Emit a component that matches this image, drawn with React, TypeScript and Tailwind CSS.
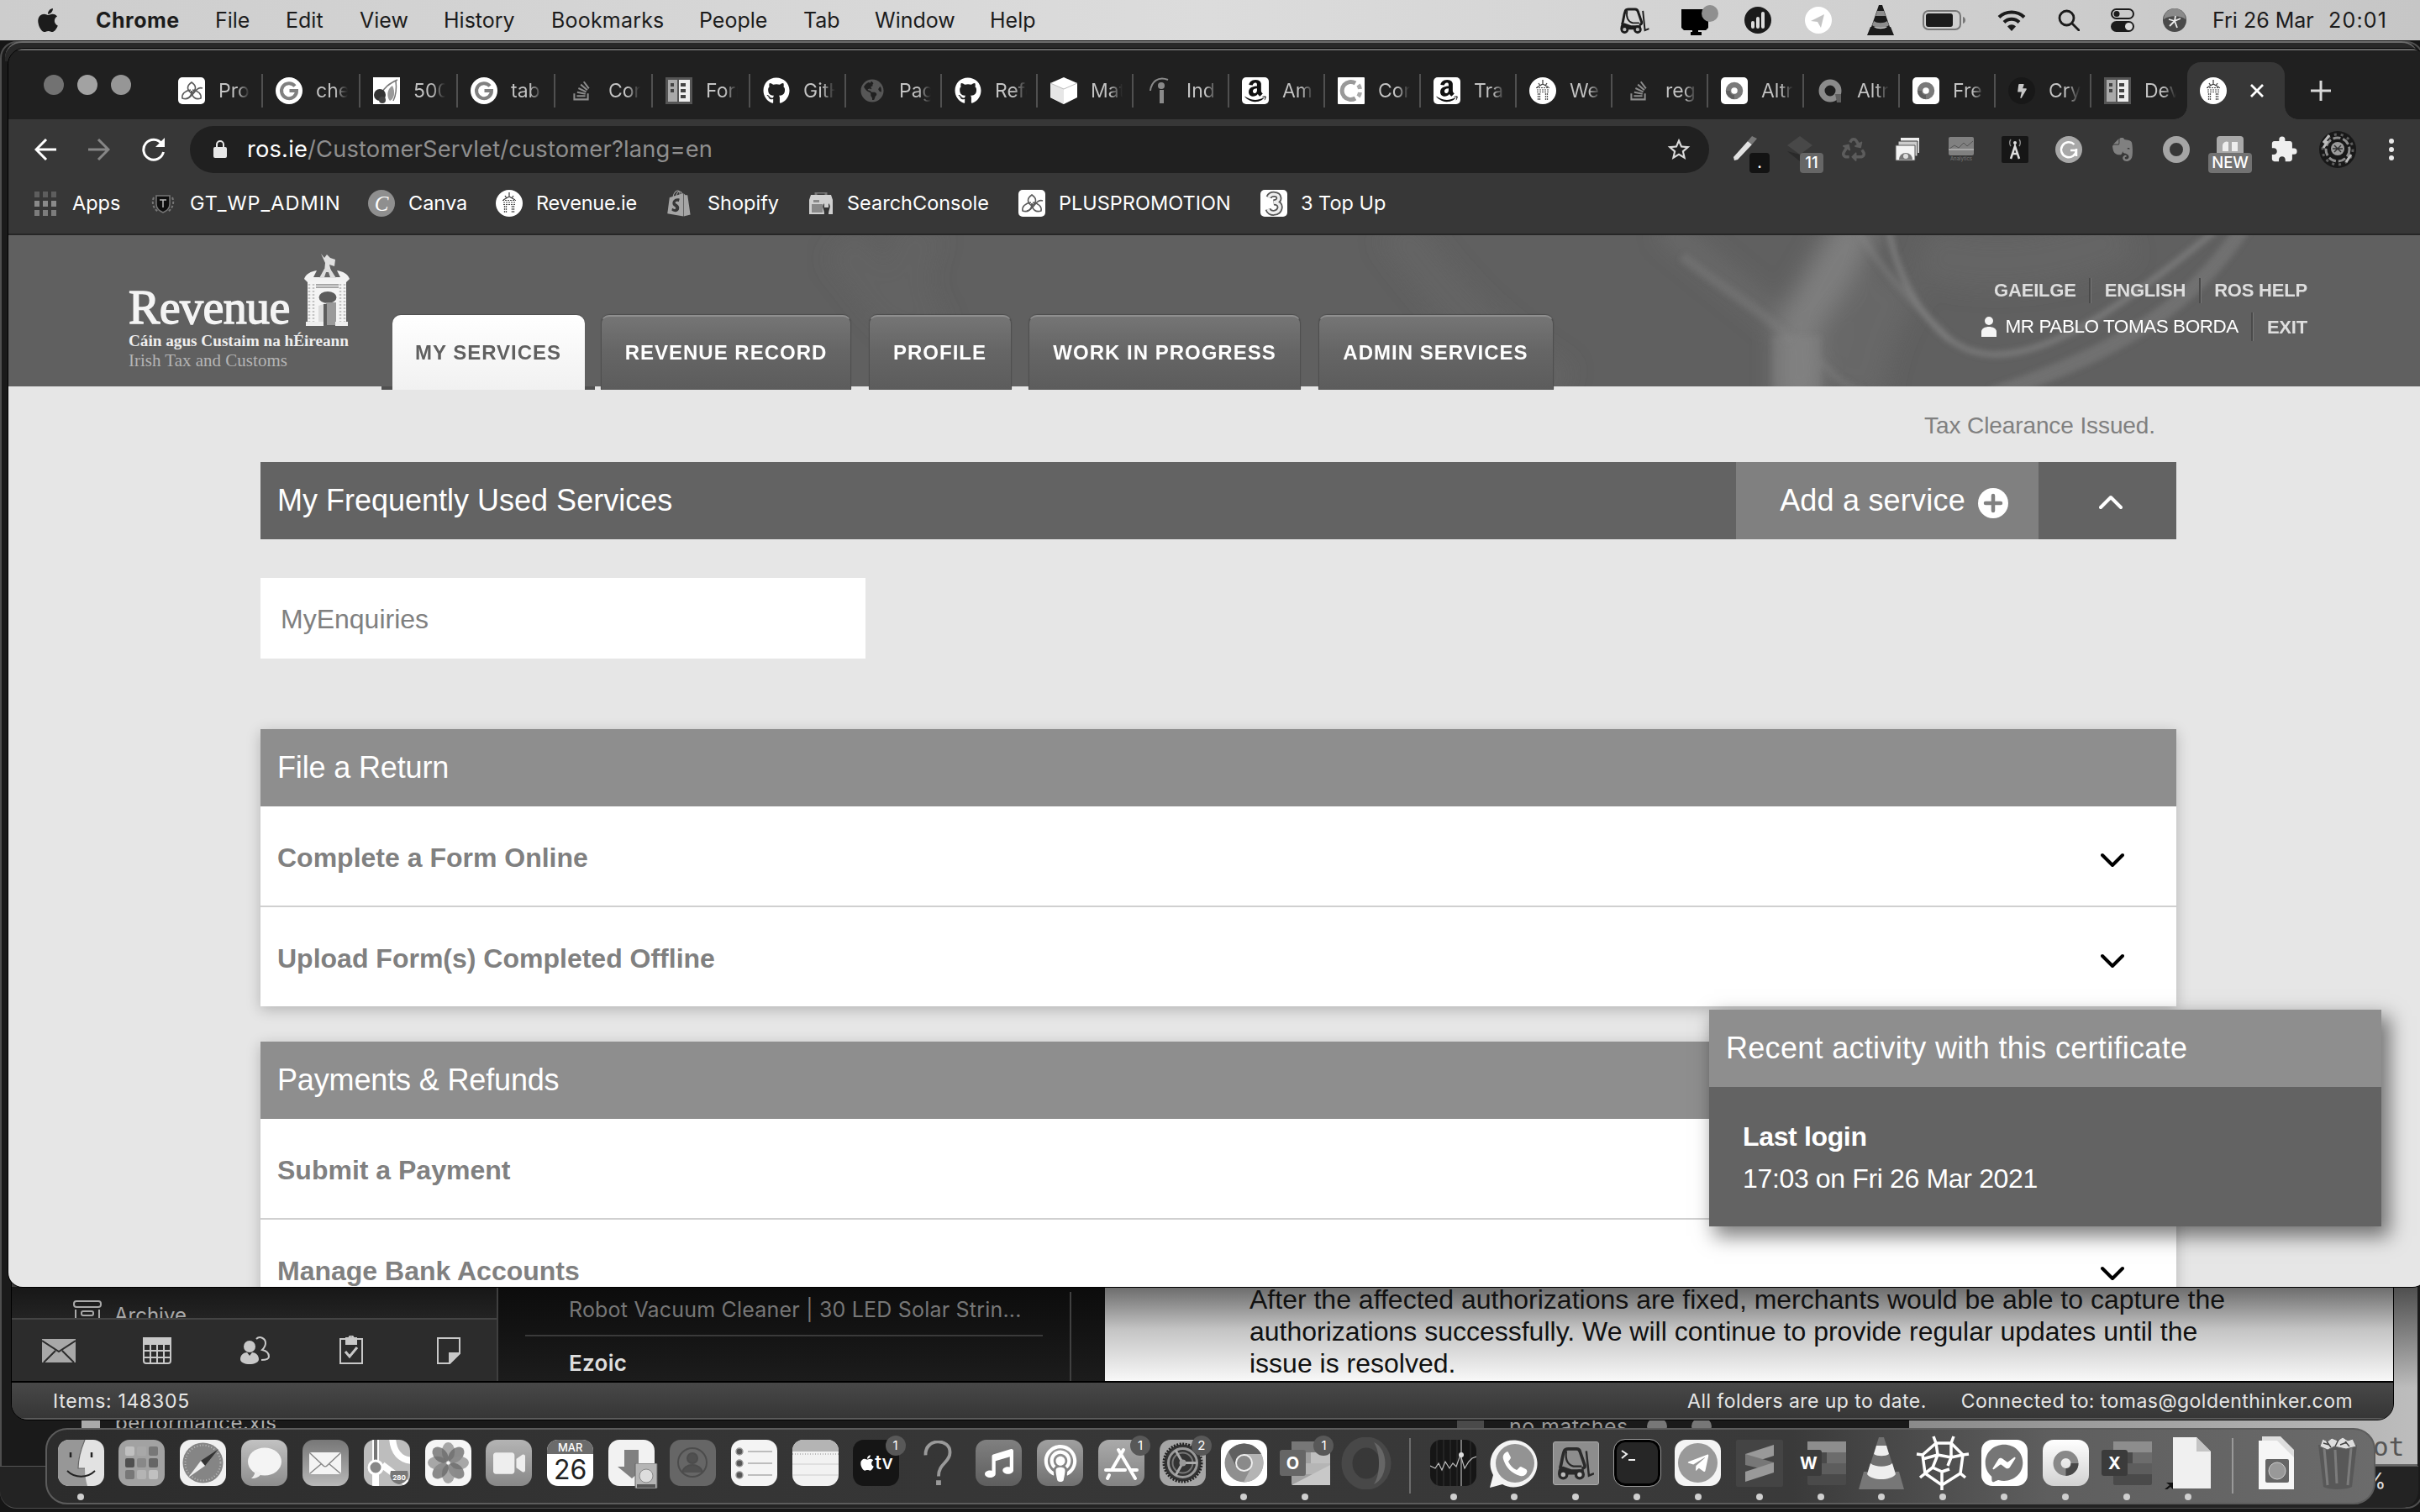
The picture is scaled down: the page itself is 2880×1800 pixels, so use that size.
import type { ReactNode } from "react";
import {
  FaAmazon,
  FaApple,
  FaBolt,
  FaEvernote,
  FaFacebookMessenger,
  FaGithub,
  FaGlobeAmericas,
  FaMusic,
  FaPodcast,
  FaRecycle,
  FaShopify,
  FaStackOverflow,
  FaTelegramPlane,
  FaVideo,
} from "react-icons/fa";
import { MdExtension, MdStarBorder } from "react-icons/md";

const sans = "font-['Liberation_Sans',Arial,sans-serif]";
const ui = "font-['Inter',sans-serif]";

/* ---------- small shared glyphs ---------- */

function Tower({ className = "" }: { className?: string }) {
  return (
    <svg viewBox="0 0 32 32" className={className}>
      <circle cx="16" cy="16" r="16" fill="#fff" />
      <path d="M16 3v6M9 12l7-4 7 4M11 7l2 3M21 7l-2 3" stroke="#444" strokeWidth="1.3" fill="none" />
      <path d="M8 12.500h16M9 15h14M9 17.500h14" stroke="#444" strokeWidth="1.200" strokeDasharray="2 1" />
      <path d="M10.500 19v9M12.500 19v9M19.500 19v9M21.500 19v9" stroke="#555" strokeWidth="1.300" strokeDasharray="2 1" />
    </svg>
  );
}

function Knot({ className = "" }: { className?: string }) {
  return (
    <svg viewBox="0 0 32 32" className={className}>
      <rect width="32" height="32" rx="5" fill="#fff" />
      <g fill="none" stroke="#5a5a5a" strokeWidth="1.600">
        <path d="M16 6c6 4 6 9 0 13-6-4-6-9 0-13z" />
        <path d="M15 15C8 16 4 20 5 25c6 2 11-1 11-9" />
        <path d="M17 15c7 1 11 5 10 10-6 2-11-1-11-9" />
        <path d="M10 25c4 0 7-4 10-8 3-4 6-5 9-4" />
      </g>
    </svg>
  );
}

function GoogleG({ className = "" }: { className?: string }) {
  return (
    <svg viewBox="0 0 32 32" className={className}>
      <circle cx="16" cy="16" r="16" fill="#fff" />
      <path d="M23 10.500A9 9 0 1 0 25 16h-8.500" fill="none" stroke="#808080" strokeWidth="4" />
    </svg>
  );
}

function Cherry({ className = "" }: { className?: string }) {
  return (
    <svg viewBox="0 0 32 32" className={className}>
      <rect width="32" height="32" fill="#fff" />
      <path d="M9 20C14 12 18 8 29 3M27 4c1 8 1 16-3 24" fill="none" stroke="#777" strokeWidth="1.500" />
      <path d="M23 10c-7 4-7 14-3 18 5-2 7-10 3-18z" fill="#999" />
      <circle cx="8" cy="21" r="7" fill="#333" />
      <circle cx="11" cy="27" r="4" fill="#444" />
    </svg>
  );
}

function Forms({ className = "" }: { className?: string }) {
  return (
    <svg viewBox="0 0 32 32" className={className}>
      <rect width="32" height="32" fill="#555" />
      <rect x="3" y="3" width="11" height="26" fill="#aaa" />
      <rect x="16" y="3" width="13" height="26" fill="#eee" />
      <path d="M6 7h4v4H6zM6 14h4v4H6zM18 7h6v4h-6zM18 14h6v4h-6zM18 21h6v4h-6z" fill="#444" />
    </svg>
  );
}

function Cube({ className = "" }: { className?: string }) {
  return (
    <svg viewBox="0 0 32 32" className={className}>
      <path d="M16 0l16 7v17l-16 8-16-8V7z" fill="#fff" />
      <path d="M0 7l16 7v18L0 24z" fill="#e6e6e6" />
      <path d="M0 7l16 7 16-7" fill="none" stroke="#bbb" />
    </svg>
  );
}

function Indeed({ className = "" }: { className?: string }) {
  return (
    <svg viewBox="0 0 32 32" className={className}>
      <circle cx="18" cy="10" r="4" fill="#8a8a8a" />
      <path d="M16 15h5v16h-5z" fill="#8a8a8a" />
      <path d="M5 16C6 6 14-2 26 3" fill="none" stroke="#8a8a8a" strokeWidth="2" />
    </svg>
  );
}

function AmazonTile({ className = "" }: { className?: string }) {
  return (
    <div className={`${className} flex items-center justify-center rounded-[5px] bg-white`}>
      <FaAmazon className="h-[30px] w-[30px] text-[#111]" />
    </div>
  );
}

function Ring({ className = "" }: { className?: string }) {
  return (
    <svg viewBox="0 0 32 32" className={className}>
      <rect width="32" height="32" rx="1" fill="#fff" />
      <path d="M21 7a10.500 10.500 0 1 0 0 18" fill="none" stroke="#999" strokeWidth="5" />
      <path d="M24.500 9a11 11 0 0 1 2 5M26.500 18a11 11 0 0 1-2 5" fill="none" stroke="#aaa" strokeWidth="5" />
    </svg>
  );
}

function Donut({ className = "", tile = true }: { className?: string; tile?: boolean }) {
  return (
    <svg viewBox="0 0 32 32" className={className}>
      {tile && <rect width="32" height="32" rx="5" fill="#fff" />}
      <circle cx="16" cy="16" r={tile ? 7 : 10} fill="none" stroke={tile ? "#7a7a7a" : "#8b8b8b"} strokeWidth={tile ? 6.5 : 7} />
      <path d={tile ? "M16 26a10 10 0 0 1-10-10h5c0 4 2 5 5 5z" : "M22 20h7v10h-5z"} fill="#5f5f5f" />
    </svg>
  );
}

function Bolt({ className = "" }: { className?: string }) {
  return (
    <div className={`${className} flex items-center justify-center rounded-full bg-[#181818]`}>
      <FaBolt className="h-[17px] w-[17px] text-[#c8c8c8]" />
    </div>
  );
}

function Forklift({ className = "" }: { className?: string }) {
  return (
    <svg viewBox="0 0 36 32" className={className} fill="none" stroke="currentColor" strokeWidth="2.500">
      <path d="M3 21C5 14 5 9 7 4c.6-1.500 2-2 4-2h8c2 0 3 1 3.500 3L27 18c.5 2-1 3-3 3" strokeWidth="3" />
      <path d="M9 4c-1 7 0 13 7 15h8" strokeWidth="1.800" />
      <path d="M1 26c0-4 1-7 5-7l8 3h12v5H1z" fill="currentColor" stroke="none" />
      <circle cx="6" cy="27" r="3.600" fill="#bbb" strokeWidth="2.800" />
      <circle cx="22" cy="27" r="3.600" fill="#bbb" strokeWidth="2.800" />
      <path d="M28.500 4l2.500 24 5-2" strokeWidth="2" />
    </svg>
  );
}

function Chevron({ up = false, className = "" }: { up?: boolean; className?: string }) {
  return (
    <svg viewBox="0 0 28 18" className={className} fill="none" stroke="currentColor" strokeWidth="4" strokeLinecap="round" strokeLinejoin="round">
      <path d={up ? "M2 15L14 3l12 12" : "M2 3l12 12L26 3"} />
    </svg>
  );
}

/* ---------- macOS menu bar ---------- */

const menus = [
  ["Chrome", "w-[142px] font-bold tracking-[0.500px]"],
  ["File", "w-[84px]"],
  ["Edit", "w-[88px]"],
  ["View", "w-[100px]"],
  ["History", "w-[128px]"],
  ["Bookmarks", "w-[176px] tracking-[0.200px]"],
  ["People", "w-[124px]"],
  ["Tab", "w-[85px]"],
  ["Window", "w-[137px]"],
  ["Help", "w-[100px]"],
];

function MenuBar() {
  return (
    <header className={`${ui} flex h-12 items-center bg-gradient-to-r from-[#cdcdcd] via-[#dcdcdc] to-[#c6c6c6] text-[25px] text-[#1c1c1c]`}>
      <FaApple className="ml-[42px] h-[32px] w-[30px]" />
      <nav className="ml-[42px] flex pt-px">
        {menus.map(([label, cls]) => (
          <span key={label} className={`shrink-0 whitespace-nowrap ${cls}`}>
            {label}
          </span>
        ))}
      </nav>
      <div className="ml-auto flex items-center">
        <Forklift className="mr-[37px] h-[31px] w-[36px]" />
        <svg viewBox="0 0 46 36" className="mr-[30px] h-[36px] w-[46px]">
          <path d="M1 5h32v22l-3 3H4l-3-3zM14 29h7v3h4v4H12v-4h2z" fill="#000" />
          <circle cx="35" cy="10" r="10" fill="#8f8f8f" />
        </svg>
        <svg viewBox="0 0 32 32" className="mr-[40px] h-8 w-8">
          <circle cx="16" cy="16" r="16" fill="#1b1b1b" />
          <path d="M10 19v5M16 14v10M22 8v16" stroke="#ddd" strokeWidth="4" strokeLinecap="round" />
        </svg>
        <svg viewBox="0 0 32 32" className="mr-[41px] h-8 w-8">
          <circle cx="16" cy="16" r="16" fill="#fff" />
          <path d="M7 17L23 9l-4 16-4-7z" fill="#c4c4c4" />
        </svg>
        <svg viewBox="0 0 34 36" className="mr-[33px] h-[36px] w-[34px]">
          <path d="M15 0h4l9 26H6z" fill="#1b1b1b" />
          <path d="M13 7l-2 6h12l-2-6zM9 19l-2 5c4 4 16 4 20 0l-2-5c-4 3-12 3-16 0z" fill="#8d8d8d" />
          <path d="M5 26h4c4 3 12 3 16 0h4l4 10H1z" fill="#1b1b1b" />
        </svg>
        <svg viewBox="0 0 52 24" className="mr-[37px] h-[24px] w-[52px]">
          <rect x="1" y="1" width="44" height="22" rx="6" fill="none" stroke="#777" strokeWidth="2" />
          <rect x="4" y="4" width="32" height="16" rx="3" fill="#1b1b1b" />
          <path d="M48 8c4 1 4 7 0 8z" fill="#777" />
        </svg>
        <svg viewBox="0 0 34 25" className="mr-[38px] h-[25px] w-[34px]" fill="none" stroke="#1b1b1b" strokeWidth="4">
          <path d="M2 8.500c8-8 22-8 30 0M8 14.500c5-5 13-5 18 0" />
          <path d="M17 25l-5-5.500c3-3 7-3 10 0z" fill="#1b1b1b" stroke="none" />
        </svg>
        <svg viewBox="0 0 26 26" className="mr-[37px] h-[26px] w-[26px]" fill="none" stroke="#1b1b1b" strokeWidth="2.800">
          <circle cx="10.500" cy="10.500" r="8.500" />
          <path d="M17 17l8 8" strokeLinecap="round" />
        </svg>
        <svg viewBox="0 0 28 28" className="mr-[34px] h-[28px] w-[28px]">
          <rect x="1" y="1" width="26" height="11" rx="5.500" fill="none" stroke="#1b1b1b" strokeWidth="2" />
          <circle cx="7" cy="6.500" r="3.500" fill="#1b1b1b" />
          <rect y="15" width="28" height="13" rx="6.500" fill="#1b1b1b" />
          <circle cx="21.500" cy="21.500" r="4.500" fill="#ddd" />
        </svg>
        <svg viewBox="0 0 28 28" className="mr-[31px] h-[28px] w-[28px]">
          <circle cx="14" cy="14" r="14" fill="#4a4a4a" />
          <path d="M1 13a13 13 0 0 1 26 0c-6-5-20-5-26 0z" fill="#8a8a8a" />
          <path d="M14 15l-7-2M14 15l7-3M14 15l3 8M14 15l-6 6M14 15l1-6" stroke="#eee" strokeWidth="1.800" />
        </svg>
        <span className="w-[138px] pt-px whitespace-nowrap">Fri 26 Mar</span>
        <span className="w-[109px] pt-px tracking-[1.200px] whitespace-nowrap">20:01</span>
      </div>
    </header>
  );
}

/* ---------- browser chrome ---------- */

const fav = "h-8 w-8 shrink-0";
const so = <FaStackOverflow className="h-[26px] w-8 shrink-0 text-[#8c8c8c]" />;
const gh = <FaGithub className="h-8 w-8 shrink-0 text-white" />;

const tabs: { icon: ReactNode; label: string }[] = [
  { icon: <Knot className={fav} />, label: "Pro" },
  { icon: <GoogleG className={fav} />, label: "che" },
  { icon: <Cherry className={fav} />, label: "500" },
  { icon: <GoogleG className={fav} />, label: "tab" },
  { icon: so, label: "Con" },
  { icon: <Forms className={fav} />, label: "Form" },
  { icon: gh, label: "GitH" },
  { icon: <FaGlobeAmericas className="h-7 w-8 shrink-0 text-[#565656]" />, label: "Pag" },
  { icon: gh, label: "Refe" },
  { icon: <Cube className={fav} />, label: "Mat" },
  { icon: <Indeed className={fav} />, label: "Ind" },
  { icon: <AmazonTile className={fav} />, label: "Am" },
  { icon: <Ring className={fav} />, label: "Con" },
  { icon: <AmazonTile className={fav} />, label: "Tra" },
  { icon: <Tower className={fav} />, label: "We" },
  { icon: so, label: "reg" },
  { icon: <Donut className={fav} />, label: "Altr" },
  { icon: <Donut tile={false} className={fav} />, label: "Altr" },
  { icon: <Donut className={fav} />, label: "Fre" },
  { icon: <Bolt className={fav} />, label: "Cry" },
  { icon: <Forms className={fav} />, label: "Dev" },
];

function TabStrip() {
  return (
    <div className="flex h-[82px] items-end bg-[#202020]">
      <div className="ml-[42px] flex gap-4 pb-[29px]">
        <i className="h-6 w-6 rounded-full bg-[#727272]" />
        <i className="h-6 w-6 rounded-full bg-[#a2a2a2]" />
        <i className="h-6 w-6 rounded-full bg-[#969696]" />
      </div>
      <div className="ml-[41px] flex h-[68px] items-center">
        {tabs.map((t, i) => (
          <div
            key={i}
            className={`flex h-10 items-center pl-[15px] ${i < 6 ? "w-[116px]" : "w-[114px]"} ${i < 20 ? "border-r-2 border-[#505050]" : ""}`}
          >
            {t.icon}
            <span className="ml-4 w-[38px] overflow-hidden bg-gradient-to-r from-[#c4c4c4] from-60% to-[#202020] bg-clip-text text-[23px] whitespace-nowrap text-transparent">
              {t.label}
            </span>
          </div>
        ))}
        <div className="relative flex h-[68px] w-[116px] items-center rounded-t-2xl bg-[#373737] pl-[15px]">
          <i className="absolute bottom-0 -left-4 h-4 w-4 bg-[radial-gradient(circle_at_0_0,transparent_15.500px,#373737_16px)]" />
          <i className="absolute -right-4 bottom-0 h-4 w-4 bg-[radial-gradient(circle_at_100%_0,transparent_15.500px,#373737_16px)]" />
          <Tower className={fav} />
          <svg viewBox="0 0 16 16" className="ml-[28px] h-4 w-4" stroke="#fff" strokeWidth="2.800">
            <path d="M1 1l14 14M15 1L1 15" />
          </svg>
        </div>
        <svg viewBox="0 0 24 24" className="ml-[31px] h-6 w-6" stroke="#d8d8d8" strokeWidth="3">
          <path d="M12 0v24M0 12h24" />
        </svg>
      </div>
    </div>
  );
}

function Badge({ children, className }: { children: ReactNode; className: string }) {
  return (
    <b className={`absolute top-[36px] flex h-6 items-center justify-center rounded-[4px] text-[18.500px] font-medium text-white ${className}`}>
      {children}
    </b>
  );
}

const ext = "relative flex h-16 w-16 shrink-0 items-center justify-center";

function Toolbar() {
  return (
    <div className="flex h-[72px] items-center bg-[#373737] text-[27.300px]">
      <svg viewBox="0 0 26 26" className="ml-[31px] h-[26px] w-[26px]" fill="none" stroke="#fff" strokeWidth="3">
        <path d="M26 13H3M14 1L2 13l12 12" />
      </svg>
      <svg viewBox="0 0 26 26" className="ml-[38px] h-[26px] w-[26px]" fill="none" stroke="#868686" strokeWidth="3">
        <path d="M0 13h23M12 1l12 12-12 12" />
      </svg>
      <svg viewBox="0 0 28 28" className="ml-[38px] h-[28px] w-[28px]" fill="none" stroke="#fff" strokeWidth="3">
        <path d="M23.500 7A12 12 0 1 0 25.500 17" />
        <path d="M27 0v11H16z" fill="#fff" stroke="none" />
      </svg>
      <div className="ml-[29px] flex h-14 w-[1808px] shrink-0 items-center rounded-full bg-[#202020] pr-[20px] pl-[28px]">
        <svg viewBox="0 0 16 22" className="h-[22px] w-4">
          <rect y="8" width="16" height="13" rx="2" fill="#e8e8e8" />
          <path d="M4 9V5a4 4 0 0 1 8 0v4" fill="none" stroke="#e8e8e8" strokeWidth="2" />
        </svg>
        <span className="ml-[24px] pt-px tracking-[0.170px] whitespace-nowrap text-[#8f8f8f]">
          <span className="text-white">ros.ie</span>/CustomerServlet/customer?lang=en
        </span>
        <MdStarBorder className="ml-auto h-[32px] w-[32px] text-[#dadada]" />
      </div>
      <div className="ml-[12px] flex">
        <div className={ext}>
          <svg viewBox="0 0 32 32" className="h-8 w-8">
            <path d="M1 25L18 6l5 4L6 28l-4 1z" fill="#e2e2e2" />
            <path d="M18 6l5-6 6 3-6 7z" fill="#777" />
          </svg>
          <Badge className="left-[36px] w-6 bg-[#131313]">.</Badge>
        </div>
        <div className={ext}>
          <svg viewBox="0 0 32 32" className="h-8 w-8">
            <path d="M16 0l15 11-15 11L1 11z" fill="#484848" />
            <path d="M1 18l15 4v8z" fill="#2a2a2a" />
          </svg>
          <Badge className="left-[32px] w-7 bg-[#666]">11</Badge>
        </div>
        <div className={ext}>
          <FaRecycle className="h-[28px] w-[28px] text-[#5c5c5c]" />
        </div>
        <div className={ext}>
          <svg viewBox="0 0 32 28" className="h-7 w-8">
            <path d="M8 0h22v18H8z" fill="#eee" />
            <path d="M5 4h23v18H5z" fill="#ccc" stroke="#373737" />
            <path d="M2 9h23v18H2z" fill="#f4f4f4" stroke="#555" />
            <path d="M6 26a8 8 0 0 1 16 0" fill="#777" />
            <circle cx="14" cy="22" r="3" fill="#ddd" />
          </svg>
        </div>
        <div className={ext}>
          <div className="flex h-[30px] flex-col items-center">
            <svg viewBox="0 0 30 22" className="h-[22px] w-[30px]">
              <rect width="30" height="22" rx="2" fill="#808080" />
              <path d="M1 14l6-4 5 3 6-6 4 4 7-6" fill="none" stroke="#555" />
              <path d="M0 15h30" stroke="#ccc" />
            </svg>
            <span className="text-[6px] leading-[8px] text-[#777]">Analytics</span>
          </div>
        </div>
        <div className={ext}>
          <svg viewBox="0 0 32 32" className="h-8 w-8">
            <rect width="32" height="32" rx="2" fill="#161616" />
            <path d="M11 27l5-15 5 15M13 21h6" fill="none" stroke="#ddd" strokeWidth="2.500" />
            <circle cx="16" cy="8" r="2" fill="#ddd" />
            <path d="M11 4c-2 3-2 5 0 8M21 4c2 3 2 5 0 8" fill="none" stroke="#888" strokeWidth="1.500" />
          </svg>
        </div>
        <div className={ext}>
          <svg viewBox="0 0 32 32" className="h-8 w-8">
            <circle cx="16" cy="16" r="16" fill="#a8a8a8" />
            <path d="M22.500 10A9 9 0 1 0 25 17h-7M25 15v9" fill="none" stroke="#fff" strokeWidth="2.500" />
          </svg>
        </div>
        <div className={ext}>
          <FaEvernote className="h-[32px] w-[32px] text-[#808080]" />
        </div>
        <div className={ext}>
          <i className="h-8 w-8 rounded-full border-[8px] border-[#a5a5a5]" />
        </div>
        <div className={ext}>
          <svg viewBox="0 0 32 32" className="h-8 w-8">
            <rect width="32" height="32" rx="4" fill="#a9a9a9" />
            <path d="M7 18V11a5 5 0 0 1 7-4v11M18 7h7v11h-7z" fill="#eee" />
          </svg>
          <Badge className="left-[6px] w-[52px] bg-[#727272]">NEW</Badge>
        </div>
        <div className={ext}>
          <MdExtension className="h-[34px] w-[34px] text-[#efefef]" />
        </div>
        <div className={ext}>
          <svg viewBox="0 0 44 44" className="h-11 w-11">
            <circle cx="22" cy="22" r="22" fill="#181818" />
            <circle cx="22" cy="22" r="14" fill="none" stroke="#8c8c8c" strokeWidth="3" strokeDasharray="9 3" />
            <circle cx="22" cy="22" r="18" fill="none" stroke="#5d5d5d" strokeWidth="3" strokeDasharray="3 5" />
            <circle cx="22" cy="21" r="8" fill="#9b9b9b" />
            <path d="M16 21h12M18 17l8 8M26 17l-8 8" stroke="#333" strokeWidth="1.500" />
            <path d="M12 5l-7 9M10 12l-5 8M38 28l-6 9" stroke="#bbb" strokeWidth="3" />
          </svg>
        </div>
        <div className="flex h-16 w-16 flex-col items-center justify-center gap-1">
          <i className="h-1.5 w-1.5 rounded-full bg-[#e8e8e8]" />
          <i className="h-1.5 w-1.5 rounded-full bg-[#e8e8e8]" />
          <i className="h-1.5 w-1.5 rounded-full bg-[#e8e8e8]" />
        </div>
      </div>
    </div>
  );
}

const bookmarks: { icon: ReactNode; label: string; cls: string }[] = [
  {
    icon: (
      <div className="ml-[1px] grid w-[26px] grid-cols-3 gap-1">
        {["bg-[#5e5e5e]", "bg-[#8a8a8a]", "bg-[#7c7c7c]"].flatMap((c, r) =>
          [0, 1, 2].map((k) => <i key={`${r}${k}`} className={`h-[7px] w-[6px] ${c}`} />),
        )}
      </div>
    ),
    label: "Apps",
    cls: "w-[138px] gap-[19px]",
  },
  {
    icon: (
      <svg viewBox="0 0 32 32" className="h-8 w-8">
        <path d="M8 7h16v10c0 6-4 8-8 10-4-2-8-4-8-10z" fill="#0e0e0e" stroke="#777" strokeWidth="1.500" />
        <path d="M12 12h8M16 12v9" stroke="#bbb" strokeWidth="1.500" />
        <path d="M5 9c-3 7 0 13 5 17M27 9c3 7 0 13-5 17" stroke="#777" strokeWidth="2" strokeDasharray="3 2" fill="none" />
      </svg>
    ),
    label: "GT_WP_ADMIN",
    cls: "w-[260px] gap-4 tracking-[1px]",
  },
  {
    icon: (
      <div className="flex h-8 w-8 items-center justify-center rounded-full bg-[#8f8f8f] font-['Liberation_Serif',serif] text-[25px] leading-none text-white italic">
        C
      </div>
    ),
    label: "Canva",
    cls: "w-[152px] gap-4",
  },
  { icon: <Tower className="h-8 w-8" />, label: "Revenue.ie", cls: "w-[202px] gap-4 tracking-[-0.200px]" },
  { icon: <FaShopify className="h-8 w-8 text-[#a5a5a5]" />, label: "Shopify", cls: "w-[171px] gap-[18px]" },
  {
    icon: (
      <svg viewBox="0 0 28 26" className="h-[26px] w-[28px]">
        <path d="M8 4V0h12v4" fill="none" stroke="#777" strokeWidth="3" />
        <path d="M2 3h24l2 6v17H0V9z" fill="#cfcfcf" />
        <path d="M5 9h7v3H5zM3 14h13v10H3z" fill="#888" />
        <path d="M18 13c-4 4 0 7 0 13h5c0-6 4-9 0-13v5h-5z" fill="#333" />
      </svg>
    ),
    label: "SearchConsole",
    cls: "w-[249px] gap-[17px]",
  },
  { icon: <Knot className="h-8 w-8" />, label: "PLUSPROMOTION", cls: "w-[288px] gap-4" },
  {
    icon: (
      <svg viewBox="0 0 32 32" className="h-8 w-8">
        <rect width="32" height="32" rx="5" fill="#fff" />
        <path d="M10 9c2-5 12-5 12 1 0 3-2 4-6 5 5 0 8 3 7 7-2 7-12 7-14 1" fill="none" stroke="#555" strokeWidth="7" />
        <path d="M10 9c2-5 12-5 12 1 0 3-2 4-6 5 5 0 8 3 7 7-2 7-12 7-14 1" fill="none" stroke="#eee" strokeWidth="3.500" />
      </svg>
    ),
    label: "3 Top Up",
    cls: "w-[200px] gap-4",
  },
];

function Bookmarks() {
  return (
    <div className="flex h-[66px] items-center border-b-2 border-[#262626] bg-[#373737] pb-2 pl-[30px] text-[23.500px] text-white">
      {bookmarks.map((b) => (
        <div key={b.label} className={`flex shrink-0 items-center whitespace-nowrap ${b.cls}`}>
          {b.icon}
          {b.label}
        </div>
      ))}
    </div>
  );
}

/* ---------- revenue page ---------- */

function Smoke() {
  return (
    <svg viewBox="0 0 1920 180" className="absolute top-0 right-0 h-[180px] w-[1920px]" preserveAspectRatio="none">
      <defs>
        <filter id="soft" x="-50%" y="-50%" width="200%" height="200%">
          <feGaussianBlur stdDeviation="14" />
        </filter>
        <filter id="fine" x="-50%" y="-50%" width="200%" height="200%">
          <feGaussianBlur stdDeviation="3" />
        </filter>
      </defs>
      <g fill="none" filter="url(#soft)">
        <path d="M40 10c30 30 40 60 80 90M140-10c-30 60-20 90 10 130" stroke="#6a6a6a" strokeWidth="50" opacity=".3" />
        <path d="M700-10c60 80 100 130 200 190" stroke="#6d6d6d" strokeWidth="50" opacity=".3" />
        <path d="M1180 200V110L1256-20" stroke="#888" strokeWidth="52" opacity=".75" />
        <path d="M1020-10l160 130" stroke="#7a7a7a" strokeWidth="24" opacity=".4" />
        <path d="M1240 190c10-60 20-90 50-140" stroke="#727272" strokeWidth="80" opacity=".45" />
        <path d="M1330 20c60 20 140 20 240-20" stroke="#6e6e6e" strokeWidth="60" opacity=".35" />
      </g>
      <g fill="none" filter="url(#fine)">
        <path d="M1042 25c50 40 90 60 130 100" stroke="#808080" strokeWidth="12" opacity=".35" />
        <path d="M1178 190v-70" stroke="#8a8a8a" strokeWidth="58" opacity=".35" />
        <path d="M1288-5C1300 60 1345 141 1412 142S1560 90 1676-5" stroke="#8b8b8b" strokeWidth="7" opacity=".6" />
        <path d="M1252-5C1290 60 1330 90 1360 125" stroke="#858585" strokeWidth="8" opacity=".4" />
        <path d="M1410 190C1530 150 1640 100 1710-10" stroke="#858585" strokeWidth="18" opacity=".45" />
        <path d="M1206 150c20 20 30 30 50 35" stroke="#858585" strokeWidth="8" opacity=".35" />
      </g>
    </svg>
  );
}

function Logo() {
  return (
    <div className="relative ml-[143px] h-full w-[272px] font-['Liberation_Serif',serif]">
      <svg viewBox="0 0 54 86" className="absolute top-[22px] left-[209px] h-[86px] w-[54px]">
        <path d="M20 0l4 5 3-4 4 4 6 2-1 8-6-2 2 8h-8l1-10z" fill="#e0e0e0" />
        <path d="M0 30c2-6 8-9 15-10l-4 8h32l-4-8c7 1 13 4 15 10l-4 4H4z" fill="#f2f2f2" />
        <path d="M18 29l6-11h7l7 11z" fill="#ddd" />
        <path d="M24 28l2-6h3l2 6z" fill="#666" />
        <rect x="4" y="33" width="46" height="52" fill="#f4f4f4" />
        <path d="M14 37h27M14 40h27" stroke="#8d8d8d" strokeWidth="1.500" />
        <path d="M6 36v48M11 36v48M43 36v48M48 36v48" stroke="#c4c4c4" strokeWidth="2.500" strokeDasharray="2 2" />
        <ellipse cx="28" cy="52" rx="10.500" ry="7" fill="#5c5c5c" />
        <path d="M17 62l9-3v24l-9 2z" fill="#dcdcdc" />
        <path d="M26 58h12v27H26z" fill="#9a9a9a" />
        <path d="M23 60h4v25h-4z" fill="#5c5c5c" />
        <path d="M2 81h21v5H2zM37 81h15v5H37z" fill="#eee" />
      </svg>
      <div className="absolute top-[50px] left-0 text-[56px] leading-[72px] tracking-[-0.600px] text-[#f4f4f4] [-webkit-text-stroke:1.400px_#f4f4f4]">
        Revenue
      </div>
      <div className="absolute top-[114px] left-0 text-[19.200px] leading-[24px] font-bold whitespace-nowrap text-[#eee]">
        Cáin agus Custaim na hÉireann
      </div>
      <div className="absolute top-[137px] left-0 text-[21px] leading-[24px] whitespace-nowrap text-[#b4b4b4]">
        Irish Tax and Customs
      </div>
    </div>
  );
}

const navTabs = [
  ["REVENUE RECORD", "w-[298px]"],
  ["PROFILE", "w-[170px]"],
  ["WORK IN PROGRESS", "w-[324px]"],
  ["ADMIN SERVICES", "w-[280px]"],
];

function SiteHeader() {
  return (
    <div className={`${sans} relative z-10 flex h-[180px] bg-[#606060]`}>
      <Smoke />
      <Logo />
      <nav className="relative mt-[95px] ml-[29px] flex h-[89px] items-end text-[24px] font-bold tracking-[1px] text-white">
        <div className="flex h-[89px] w-[254px] justify-center bg-[linear-gradient(to_bottom,transparent_85px,#505050_85px)]">
          <div className="flex w-[229px] items-center justify-center rounded-t-[10px] bg-gradient-to-b from-white to-[#f1f1f1] pt-px text-[#606060] shadow-[0_-1px_1px_#505050]">
            MY SERVICES
          </div>
        </div>
        <div className="ml-[7px] flex gap-[20.500px]">
          {navTabs.map(([label, cls]) => (
            <div
              key={label}
              className={`flex h-[89px] items-center justify-center rounded-t-[10px] border-x border-t-2 border-x-[#4f4f4f] border-t-[#8f8f8f] bg-gradient-to-b from-[#757575] from-0% via-[#666] via-45% to-[#5c5c5c] pb-px whitespace-nowrap shadow-[0_-1px_1px_#4c4c4c] ${cls}`}
            >
              {label}
            </div>
          ))}
        </div>
      </nav>
      <div className="relative mt-[50px] ml-auto w-[560px] pr-[134px] text-[22px] font-bold tracking-[-0.200px] text-[#dedede]">
        <div className="flex h-[30px] items-center justify-end gap-[15.500px] pt-px whitespace-nowrap">
          GAEILGE
          <i className="h-[30px] w-[3px] shrink-0 border-r border-[#767676] bg-[#4a4a4a]" />
          ENGLISH
          <i className="h-[30px] w-[3px] shrink-0 border-r border-[#767676] bg-[#4a4a4a]" />
          ROS HELP
        </div>
        <div className="mt-[12px] flex h-[34px] items-center justify-end gap-[15.500px] whitespace-nowrap">
          <span className="flex items-center text-[22.500px] font-normal tracking-[-0.450px] text-white">
            <svg viewBox="0 0 18 24" className="mr-[11px] h-6 w-[18px] shrink-0">
              <circle cx="9" cy="5" r="5" fill="#f4f4f4" />
              <path d="M0 24v-6c0-8 18-8 18 0v6z" fill="#f4f4f4" />
            </svg>
            MR PABLO TOMAS BORDA
          </span>
          <i className="h-[34px] w-[3px] shrink-0 border-r border-[#767676] bg-[#4a4a4a]" />
          EXIT
        </div>
      </div>
    </div>
  );
}

function Section({ title, rows, className = "" }: { title: string; rows: string[]; className?: string }) {
  return (
    <section className={`w-[2280px] bg-white shadow-[0_4px_16px_rgba(0,0,0,0.22)] ${className}`}>
      <h2 className="flex h-[92px] items-center bg-[#8e8e8e] pl-[20px] text-[36px] tracking-[-0.150px] text-white">{title}</h2>
      {rows.map((r, i) => (
        <div
          key={r}
          className={`flex items-center justify-between pt-[3px] pr-[62px] pl-[20px] text-[32px] font-bold text-[#808080] ${i > 0 ? "h-[120px] border-t-2 border-[#d0d0d0]" : "h-[118px]"}`}
        >
          {r}
          <Chevron className="mt-1.5 h-[18px] w-[28px] text-black" />
        </div>
      ))}
    </section>
  );
}

function Page() {
  return (
    <main className={`${sans} relative flex h-[1072px] flex-col overflow-hidden bg-[#e6e6e6] px-[300px]`}>
      <p className="h-[90px] shrink-0 pt-[31px] pr-[15px] text-right text-[28px] leading-[32px] tracking-[-0.100px] text-[#808080]">Tax Clearance Issued.</p>
      <div className="flex h-[92px] w-[2280px] shrink-0 items-center bg-[#636363] pl-[20px] text-[36px] text-white">
        My Frequently Used Services
        <button className="ml-auto flex h-full w-[360px] items-center justify-center gap-[15px] bg-[#808080] pl-[16px] tracking-[0.200px]">
          Add a service
          <svg viewBox="0 0 36 36" className="mt-1.5 h-9 w-9">
            <circle cx="18" cy="18" r="18" fill="#fff" />
            <path d="M18 9v18M9 18h18" stroke="#808080" strokeWidth="4.500" strokeLinecap="round" />
          </svg>
        </button>
        <button className="flex h-full w-[164px] items-center justify-center pt-1 pl-[7px]">
          <Chevron up className="h-[18px] w-[28px]" />
        </button>
      </div>
      <div className="mt-[46px] flex h-[96px] w-[720px] shrink-0 items-center bg-white pt-px pl-[24px] text-[32px] text-[#808080]">MyEnquiries</div>
      <Section className="mt-[84px] shrink-0" title="File a Return" rows={["Complete a Form Online", "Upload Form(s) Completed Offline"]} />
      <Section className="mt-[42px] shrink-0" title="Payments & Refunds" rows={["Submit a Payment", "Manage Bank Accounts"]} />
      <aside className="absolute top-[742px] left-[2024px] w-[800px] bg-[#636363] text-white shadow-[8px_10px_22px_2px_rgba(0,0,0,0.5)]">
        <h3 className="flex h-[92px] items-center bg-[#8e8e8e] pl-[20px] text-[36px] tracking-[0.300px]">Recent activity with this certificate</h3>
        <div className="h-[166px] pt-[34px] pl-[40px] text-[32px] leading-[50px] tracking-[-0.350px]">
          <p className="font-bold">Last login</p>
          <p>17:03 on Fri 26 Mar 2021</p>
        </div>
      </aside>
    </main>
  );
}

function Browser() {
  return (
    <div className={`${ui} absolute top-[57px] left-[9px] w-[2880px] overflow-hidden rounded-t-[20px] rounded-b-[18px] border border-black bg-[#202020]`}>
      <div className="border-t-2 border-[#666]">
        <TabStrip />
        <Toolbar />
        <Bookmarks />
        <div className="w-[2870px]">
          <SiteHeader />
          <Page />
        </div>
      </div>
    </div>
  );
}

/* ---------- mail window ---------- */

function Mail() {
  return (
    <div className={`${ui} absolute top-[1400px] left-[13px] flex h-[291px] w-[2836px] flex-col overflow-hidden rounded-b-[20px] border border-black bg-[#3c3c3c]`}>
      <div className="flex h-[245px] border-b-2 border-black pt-[131px]">
        <div className="w-[577px] bg-[#2c2c2c]">
          <div className="flex h-[39px] gap-[15px] overflow-hidden border-b-2 border-[#444] bg-gradient-to-b from-[#171717] to-[#232323] pl-[73px] text-[24px] text-[#a8a8a8]">
            <svg viewBox="0 0 34 34" className="mt-[16px] h-[34px] w-[34px] shrink-0" fill="none" stroke="#a8a8a8" strokeWidth="2">
              <rect x="1" y="1" width="32" height="7" rx="3" />
              <path d="M3 11v22h28V11" />
              <rect x="10" y="13" width="14" height="5" rx="2" />
            </svg>
            <span className="mt-[16px]">Archive</span>
          </div>
          <div className="flex h-[74px] items-center pl-[36px] text-[#c8c8c8]">
            <svg viewBox="0 0 40 28" className="h-7 w-10">
              <path d="M0 0h40v28H0z" fill="#a8a8a8" />
              <path d="M0 2l20 13L40 2M2 28l14-14M38 28L24 14" fill="none" stroke="#2c2c2c" strokeWidth="2" />
            </svg>
            <svg viewBox="0 0 34 32" className="ml-[80px] h-8 w-[34px]" fill="none" stroke="#c8c8c8" strokeWidth="2">
              <rect x="1" y="1" width="32" height="30" rx="3" />
              <path d="M1 1h32v7H1z" fill="#c8c8c8" />
              <path d="M1 16h32M1 24h32M9 8v23M17 8v23M25 8v23" />
            </svg>
            <svg viewBox="0 0 36 34" className="ml-[82px] h-[34px] w-9">
              <circle cx="11" cy="12" r="7" fill="#c8c8c8" />
              <path d="M0 27c0-5 4-8 8-8l3 4 3-4c4 0 8 3 8 8 0 8-22 8-22 0z" fill="#c8c8c8" />
              <path d="M19 3c4-4 11-1 11 5 0 4-2 6-4 8 5 1 8 4 8 8 0 3-3 4-9 4" fill="none" stroke="#c8c8c8" strokeWidth="2" />
            </svg>
            <svg viewBox="0 0 28 34" className="mb-0.5 ml-[82px] h-[34px] w-7" fill="none" stroke="#c8c8c8" strokeWidth="2">
              <path d="M1 4h26v29H1z" />
              <path d="M8 3h12v7H8z" fill="#c8c8c8" />
              <circle cx="14" cy="3" r="2.500" />
              <path d="M7 19l5 6 9-11" strokeWidth="3" />
            </svg>
            <svg viewBox="0 0 28 32" className="ml-[88px] h-8 w-7" fill="none" stroke="#c8c8c8" strokeWidth="2">
              <path d="M15 31H1V1h26v18z" />
              <path d="M15 31V19h12z" fill="#c8c8c8" />
            </svg>
          </div>
        </div>
        <div className="w-[724px] border-l-2 border-[#3f3f3f] bg-gradient-to-b from-[#0c0c0c] to-[#1c1c1c] pt-[6px]">
          <div className="h-full w-[682px] border-r-2 border-[#404040] text-[25px]">
            <p className="h-[51px] pl-[84px] leading-[43px] tracking-[0.200px] whitespace-nowrap text-[#777]">Robot Vacuum Cleaner | 30 LED Solar Strin...</p>
            <div className="ml-[32px] w-[616px] border-t-2 border-[#3a3a3a]" />
            <p className="pt-[12px] pl-[84px] text-[26px] leading-[40px] font-semibold tracking-[0.300px] text-[#dedede]">Ezoic</p>
          </div>
        </div>
        <div className={`${sans} flex-1 bg-gradient-to-b from-[#6c6c6c] via-[#c4c4c4] via-45% to-[#f8f8f8] pl-[172px] text-[32px] leading-[38px] text-[#111]`}>
          <p className="-mt-[4px] whitespace-nowrap">
            After the affected authorizations are fixed, merchants would be able to capture the
            <br />
            authorizations successfully. We will continue to provide regular updates until the
            <br />
            issue is resolved.
          </p>
        </div>
      </div>
      <footer className="flex h-[44px] items-center border-b-2 border-[#5a5a5a] bg-gradient-to-b from-[#484848] to-[#363636] pt-[2px] pr-[48px] pl-[49px] text-[23px] tracking-[0.450px] text-[#e6e6e6]">
        <span className="tracking-[0.700px]">Items: 148305</span>
        <span className="ml-auto">All folders are up to date.</span>
        <span className="ml-[41px]">Connected to: tomas@goldenthinker.com</span>
      </footer>
    </div>
  );
}

/* ---------- dock ---------- */

function Tile({ children, className }: { children?: ReactNode; className: string }) {
  return (
    <div className={`relative flex h-[55px] w-[55px] items-center justify-center overflow-hidden rounded-[13px] ${className}`}>{children}</div>
  );
}

function Office({ letter, light }: { letter: string; light?: boolean }) {
  return (
    <svg viewBox="0 0 60 56" className="h-[56px] w-[60px]">
      <rect x="14" y="2" width="46" height="52" rx="2" fill={light ? "#a0a0a0" : "#4a4a4a"} />
      <rect x="14" y="2" width="46" height="13" fill={light ? "#777" : "#8d8d8d"} />
      <rect x="37" y="15" width="23" height="13" fill={light ? "#c0c0c0" : "#6c6c6c"} />
      <rect x="14" y="28" width="46" height="13" fill={light ? "#b5b5b5" : "#5d5d5d"} />
      {light && <path d="M14 54l46-24v24z" fill="#c8c8c8" />}
      <rect y="12" width="31" height="31" rx="3" fill={light ? "#666" : "#3b3b3b"} />
      <text x="15.500" y="35" textAnchor="middle" fontFamily="Inter" fontWeight="700" fontSize="20" fill="#fff">
        {letter}
      </text>
    </svg>
  );
}

const dial = (
  <svg viewBox="0 0 55 55" className="h-[55px] w-[55px]">
    <circle cx="27.500" cy="27.500" r="24" fill="#858585" />
    <circle cx="27.500" cy="27.500" r="21" fill="none" stroke="#bbb" strokeWidth="2" strokeDasharray="1 2.500" />
    <path d="M46 11L30 31l-5-6z" fill="#333" />
    <path d="M10 45l15-20 5 6z" fill="#eee" />
  </svg>
);

const trafficCone = (
  <svg viewBox="0 0 56 64" className="h-[64px] w-[56px]">
    <path d="M7 42h42l6 21H1z" fill="#777" />
    <path d="M25 1h6l14 44c-6 8-28 8-34 0z" fill="#707070" />
    <path d="M22 11l-3 10c4 3 14 3 18 0l-3-10zM15 32l-4 13c6 8 28 8 34 0l-4-13c-6 5-20 5-26 0z" fill="#eee" />
  </svg>
);

type DockApp = { icon: ReactNode; run?: boolean; badge?: string };

const leftApps: DockApp[] = [
  {
    run: true,
    icon: (
      <Tile className="bg-[#e2e2e2]">
        <svg viewBox="0 0 55 55" className="h-[55px] w-[55px]">
          <path d="M0 0h32c-5 12-8 22-8 34h8c0 8 1 14 3 21H0z" fill="#979797" />
          <path d="M15 15v6M40 15v6" stroke="#222" strokeWidth="2.500" />
          <path d="M11 37c9 9 24 9 33 0" fill="none" stroke="#222" strokeWidth="1.800" />
          <path d="M32 0c-5 12-8 22-8 34h8" fill="none" stroke="#666" strokeWidth="1.200" />
        </svg>
      </Tile>
    ),
  },
  {
    icon: (
      <Tile className="bg-[#a2a2a2]">
        <div className="grid grid-cols-3 gap-[3px]">
          {["bg-[#c0c0c0]", "bg-[#a8a8a8]", "bg-[#777]", "bg-[#505050]", "bg-[#888]", "bg-[#666]", "bg-[#777]", "bg-[#b4b4b4]", "bg-[#c0c0c0]"].map((c, i) => (
            <i key={i} className={`h-[11px] w-[11px] rounded-[2px] ${c}`} />
          ))}
        </div>
      </Tile>
    ),
  },
  { icon: <Tile className="bg-[#f0f0f0]">{dial}</Tile> },
  {
    icon: (
      <Tile className="bg-gradient-to-b from-[#c2c2c2] to-[#8d8d8d]">
        <svg viewBox="0 0 44 40" className="h-10 w-11">
          <ellipse cx="22" cy="18" rx="20" ry="16.500" fill="#f4f4f4" />
          <path d="M10 28c1 5-1 7-4 10 6 0 10-2 12-6z" fill="#eee" />
        </svg>
      </Tile>
    ),
  },
  {
    icon: (
      <Tile className="bg-gradient-to-b from-[#777] to-[#b8b8b8]">
        <svg viewBox="0 0 38 26" className="h-[26px] w-[38px]" stroke="#888" strokeWidth="1.500">
          <rect width="38" height="26" rx="3" fill="#f4f4f4" stroke="none" />
          <path d="M1 25l13-11M37 25L24 14M1 1l16 15c1 1 3 1 4 0L37 1" fill="none" />
        </svg>
      </Tile>
    ),
  },
  {
    icon: (
      <Tile className="bg-[#bdbdbd]">
        <svg viewBox="0 0 55 55" className="h-[55px] w-[55px]">
          <path d="M14 0v55M22 30l33 25" stroke="#fff" strokeWidth="8" />
          <path d="M14 0v30" stroke="#777" strokeWidth="4" />
          <path d="M34-5c0 20 10 30 26 30" fill="none" stroke="#fff" strokeWidth="8" />
          <circle cx="14" cy="33" r="8" fill="#888" stroke="#fff" strokeWidth="3" />
          <path d="M32 37h20c3 10-4 15-10 16-6-1-13-6-10-16z" fill="#777" />
          <text x="42" y="48" textAnchor="middle" fontFamily="Inter" fontWeight="700" fontSize="8" fill="#fff">
            280
          </text>
        </svg>
      </Tile>
    ),
  },
  {
    icon: (
      <Tile className="bg-[#f6f6f6]">
        <svg viewBox="-27 -27 54 54" className="h-[55px] w-[55px]">
          {[0, 45, 90, 135, 180, 225, 270, 315].map((a, i) => (
            <ellipse key={a} cy="-13" rx="7.500" ry="11" fill={i % 2 ? "#666" : "#8c8c8c"} opacity=".75" transform={`rotate(${a})`} />
          ))}
        </svg>
      </Tile>
    ),
  },
  {
    icon: (
      <Tile className="bg-gradient-to-b from-[#b4b4b4] to-[#888]">
        <FaVideo className="h-[36px] w-[38px] text-[#eee]" />
      </Tile>
    ),
  },
  {
    icon: (
      <Tile className={`${ui} flex-col bg-white`}>
        <span className="h-[17px] w-full bg-[#6b6b6b] text-center text-[13px] leading-[18px] font-medium text-white">MAR</span>
        <span className="flex-1 text-[32px] leading-[37px] text-[#222]">26</span>
      </Tile>
    ),
  },
  {
    icon: (
      <div className="relative">
        <Tile className="bg-[#f2f2f2]">
          <svg viewBox="0 0 55 55" className="h-[55px] w-[55px]">
            <path d="M19 12h17v20h9L28 46 11 32h8z" fill="#808080" />
          </svg>
        </Tile>
        <svg viewBox="0 0 28 30" className="absolute -right-[4px] -bottom-[3px] h-[30px] w-[28px]">
          <rect x="1" width="26" height="30" rx="1" fill="#b5b5b5" stroke="#666" />
          <circle cx="14" cy="15" r="8" fill="#ddd" stroke="#888" />
          <path d="M3 25h22v4H3z" fill="#555" />
        </svg>
      </div>
    ),
  },
  {
    icon: (
      <Tile className="bg-[#666]">
        <svg viewBox="0 0 55 55" className="h-[55px] w-[55px]" fill="none" stroke="#4c4c4c" strokeWidth="2">
          <circle cx="27" cy="27" r="17" />
          <circle cx="27" cy="22" r="6" fill="#505050" />
          <path d="M15 39c2-12 22-12 24 0" fill="#505050" />
        </svg>
      </Tile>
    ),
  },
  {
    icon: (
      <Tile className="bg-[#f4f4f4]">
        <svg viewBox="0 0 55 55" className="h-[55px] w-[55px]" stroke="#aaa" strokeWidth="1.500">
          <path d="M20 14h29M20 28h29M20 42h29" />
          <g fill="#555" stroke="#999">
            <circle cx="10" cy="14" r="4" />
            <circle cx="10" cy="28" r="4" />
            <circle cx="10" cy="42" r="4" />
          </g>
        </svg>
      </Tile>
    ),
  },
  {
    icon: (
      <Tile className="bg-[#f2f2f2]">
        <svg viewBox="0 0 55 55" className="h-[55px] w-[55px]">
          <path d="M0 0h55v14H0z" fill="#b4b4b4" />
          <path d="M0 17h55" stroke="#888" strokeDasharray="1 2" />
          <path d="M0 29h55M0 42h55" stroke="#ccc" />
        </svg>
      </Tile>
    ),
  },
  {
    badge: "1",
    icon: (
      <Tile className={`${ui} bg-[#151515] text-[23px] font-medium text-white`}>
        <FaApple className="h-[21px] w-[18px]" />
        tv
      </Tile>
    ),
  },
  {
    icon: (
      <svg viewBox="0 0 36 56" className="h-[54px] w-9" fill="none" stroke="#9a9a9a" strokeWidth="4">
        <path d="M3 18C2-4 34-3 33 15c0 12-14 13-14 29" />
        <path d="M16 49h6v6h-6z" fill="#9a9a9a" stroke="none" />
      </svg>
    ),
  },
  {
    icon: (
      <Tile className="bg-gradient-to-b from-[#808080] to-[#5e5e5e]">
        <FaMusic className="h-[34px] w-[34px] text-white" />
      </Tile>
    ),
  },
  {
    icon: (
      <Tile className="bg-gradient-to-b from-[#a0a0a0] to-[#707070]">
        <FaPodcast className="h-[44px] w-[44px] text-white" />
      </Tile>
    ),
  },
  {
    badge: "1",
    icon: (
      <Tile className="bg-gradient-to-b from-[#aaa] to-[#838383]">
        <svg viewBox="0 0 44 44" className="h-11 w-11" stroke="#fff" strokeWidth="4" strokeLinecap="round">
          <path d="M25 6L11 30M19 6l20 34M4 30h23M34 30h7M8 36l-2 4" />
        </svg>
      </Tile>
    ),
  },
  {
    badge: "2",
    icon: (
      <Tile className="bg-[#a6a6a6]">
        <svg viewBox="0 0 55 55" className="h-[55px] w-[55px]" fill="none">
          <circle cx="27.500" cy="27.500" r="22" fill="#333" />
          <circle cx="27.500" cy="27.500" r="22.500" stroke="#222" strokeWidth="3" strokeDasharray="2 1.500" />
          <circle cx="27.500" cy="27.500" r="17" stroke="#999" strokeWidth="3" />
          <circle cx="27.500" cy="27.500" r="12" stroke="#777" strokeWidth="2" />
          <path d="M27.500 27.500h17M27.500 27.500L19 12.500M27.500 27.500L19 42.500" stroke="#aaa" strokeWidth="3" />
          <circle cx="27.500" cy="27.500" r="4" fill="#999" />
        </svg>
      </Tile>
    ),
  },
  {
    run: true,
    icon: (
      <Tile className="bg-white">
        <svg viewBox="0 0 55 55" className="h-[55px] w-[55px]">
          <circle cx="27.500" cy="27.500" r="23" fill="#8f8f8f" />
          <path d="M27.500 17H48A23 23 0 0 0 9 14l9 18z" fill="#606060" />
          <path d="M48 17H27.500l9 15L27 50.500A23 23 0 0 0 48 17z" fill="#b4b4b4" />
          <circle cx="27.500" cy="27.500" r="10.500" fill="#eee" />
          <circle cx="27.500" cy="27.500" r="8.500" fill="#8a8a8a" />
        </svg>
      </Tile>
    ),
  },
  { run: true, badge: "1", icon: <Office letter="O" light /> },
  {
    icon: (
      <svg viewBox="0 0 62 62" className="h-[62px] w-[62px]">
        <ellipse cx="31" cy="31" rx="23" ry="25" fill="none" stroke="#484848" strokeWidth="13" />
        <path d="M40 6c18 8 18 42 0 50 8-12 8-38 0-50z" fill="#666" />
      </svg>
    ),
  },
];

const midApps: DockApp[] = [
  {
    run: true,
    icon: (
      <Tile className="bg-[#161616]">
        <svg viewBox="0 0 55 55" className="h-[55px] w-[55px]" fill="none">
          <path d="M8 0v55M16 0v55M24 0v55M32 0v55M48 0v55" stroke="#333" />
          <path d="M37 0v55" stroke="#999" strokeWidth="1.500" />
          <path d="M0 31l6 3 4-6 4 8 4-10 5 8 4-6 4 4 5-14 5 16 5-8 4-4 5-2" stroke="#bbb" strokeWidth="1.200" />
          <circle cx="37" cy="18" r="3" fill="#ddd" />
        </svg>
      </Tile>
    ),
  },
  {
    run: true,
    icon: (
      <svg viewBox="0 0 60 60" className="h-[60px] w-[60px]">
        <path d="M1 59l4-15A28 28 0 1 1 16 55z" fill="#f4f4f4" />
        <circle cx="31" cy="30" r="23" fill="#939393" />
        <path
          d="M20 17c-3 2-4 5-3 8 3 10 10 17 20 20 4 1 7-1 8-4 1-2 0-3-1-4l-6-3c-2 0-3 3-5 4-5-2-8-6-10-10 1-2 3-3 3-5l-3-6c0-1-2-1-3 0z"
          fill="#fff"
        />
      </svg>
    ),
  },
  {
    run: true,
    icon: (
      <div className="flex h-[52px] w-[55px] items-center justify-center rounded-[3px] border border-[#aaa] bg-[#8d8d8d] text-[#2a2a2a]">
        <Forklift className="h-[42px] w-[44px]" />
      </div>
    ),
  },
  {
    run: true,
    icon: (
      <Tile className="border-[3px] border-black bg-[#262626] outline outline-[#999]">
        <svg viewBox="0 0 46 46" className="h-[46px] w-[46px]" fill="none" stroke="#eee" strokeWidth="2">
          <path d="M5 8l6 4-6 5M13 19h8" />
        </svg>
      </Tile>
    ),
  },
  {
    run: true,
    icon: (
      <Tile className="bg-[#f4f4f4]">
        <div className="flex h-[47px] w-[47px] items-center justify-center rounded-full bg-[#999]">
          <FaTelegramPlane className="h-[28px] w-[28px] text-white" />
        </div>
      </Tile>
    ),
  },
  {
    run: true,
    icon: (
      <div className="flex h-[58px] w-[58px] items-center justify-center rounded-[3px] border border-[#3a3a3a] bg-[#444]">
        <svg viewBox="0 0 34 44" className="h-11 w-[34px]" fill="#999">
          <path d="M34 0v13L0 24V11z" />
          <path d="M0 11l34 10v11L0 24z" fill="#777" />
          <path d="M34 21v12L0 44V32z" />
        </svg>
      </div>
    ),
  },
  { run: true, icon: <Office letter="W" /> },
  { run: true, icon: trafficCone },
  {
    run: true,
    icon: (
      <svg viewBox="0 0 64 66" className="h-[66px] w-[64px]" fill="none" stroke="#fff" strokeWidth="3.500">
        <path d="M21 1l3 8h18l3-8M24 9L8 23l-7-1M42 9l14 14 7-1M8 23l3 22-6 5M56 23l-3 22 6 5M11 45l20 14 22-14M31 59v6M24 9l2 14 16 3 14-3M42 26V9M26 23L8 28M26 23l-6 15 11 5M20 38l-9 7M31 43l9-3M31 43v16M42 26l-4 10" />
      </svg>
    ),
  },
  {
    run: true,
    icon: (
      <Tile className="bg-white">
        <FaFacebookMessenger className="h-[46px] w-[46px] text-[#767676]" />
      </Tile>
    ),
  },
  {
    run: true,
    icon: (
      <Tile className="bg-gradient-to-b from-white to-[#d2d2d2]">
        <svg viewBox="0 0 55 55" className="h-[55px] w-[55px]" fill="none">
          <circle cx="27.500" cy="28" r="10.500" stroke="#888" strokeWidth="9" />
          <path d="M27.500 43a15 15 0 0 0 15-15h-9c0 4-2 6-6 6z" fill="#484848" />
        </svg>
      </Tile>
    ),
  },
  { run: true, icon: <Office letter="X" /> },
  {
    run: true,
    icon: (
      <svg viewBox="0 0 58 62" className="h-[62px] w-[58px]">
        <path d="M11 0h28l17 17v44H11z" fill="#f0f0f0" />
        <path d="M39 0v17h17z" fill="#c4c4c4" />
        <path d="M1 62l6-5-4-3h8v8l-3-3-5 4z" fill="#111" />
      </svg>
    ),
  },
];

const rightApps: DockApp[] = [
  {
    icon: (
      <svg viewBox="0 0 44 64" className="h-[64px] w-11">
        <path d="M4 0h22l16 16v40H4z" fill="#ddd" />
        <path d="M0 5h22l20 20v38H0z" fill="#f6f6f6" />
        <rect x="8" y="27" width="28" height="28" rx="2" fill="#666" />
        <circle cx="22" cy="41" r="10" fill="#999" stroke="#ccc" />
      </svg>
    ),
  },
  {
    icon: (
      <svg viewBox="0 0 50 64" className="h-[64px] w-[50px]">
        <path d="M2 10h46l-6 50c-6 4-28 4-34 0z" fill="#585858" />
        <path d="M9 14l4 44M41 14l-4 44M22 16l2 40" stroke="#7c7c7c" strokeWidth="3" />
        <path d="M4 12l3-9 6 3 5-4 7 3 6-4 6 4 6-2 4 9-12 3-14-3-8 4z" fill="#ddd" stroke="#666" />
        <path d="M12 6l5 7M26 4l-4 8M34 6l5 6M8 8l7 2M28 10l8-3" stroke="#444" strokeWidth="1.500" />
      </svg>
    ),
  },
];

function DockItem({ app }: { app: DockApp }) {
  return (
    <div className="relative flex w-[72.850px] shrink-0 flex-col items-center">
      <div className="mt-[5px] flex h-[73px] items-center">{app.icon}</div>
      {app.run && <i className="absolute top-[78px] h-2 w-2 rounded-full bg-[#cfcfcf]" />}
      {app.badge && (
        <b className={`${ui} absolute top-[9px] left-[47px] flex h-6 w-6 items-center justify-center rounded-full bg-[#585858] text-[15px] font-normal text-white`}>
          {app.badge}
        </b>
      )}
    </div>
  );
}

function Dock() {
  return (
    <div className="absolute top-[1700px] left-[54px] flex h-[91px] w-[2773px] rounded-[26px] border-2 border-[#5c5c5c] bg-[linear-gradient(to_right,#2c2c2c,#353535_30%,#3a3a3a_75%,#5e5e5e_86%,#6b6b6b)] pl-[3.600px]">
      <div className="-mt-0.5 flex">
        {leftApps.map((a, i) => (
          <DockItem key={i} app={a} />
        ))}
        <div className="flex w-[31px] justify-center pt-[12px]">
          <i className="h-[66px] w-0.5 bg-[#6c6c6c]" />
        </div>
        {midApps.map((a, i) => (
          <DockItem key={i} app={a} />
        ))}
        <div className="flex w-[33px] justify-center pt-[12px]">
          <i className="h-[66px] w-0.5 bg-[#999]" />
        </div>
        {rightApps.map((a, i) => (
          <DockItem key={i} app={a} />
        ))}
      </div>
    </div>
  );
}

/* ---------- windows behind ---------- */

function Backdrop() {
  return (
    <div className={`${ui} absolute top-12 left-0 h-[1752px] w-[2880px] bg-[#161616]`}>
      <div className="absolute top-[1px] left-0 h-[1747px] w-[2884px] rounded-[20px] border-2 border-[#4e4e4e] bg-[#1a1a1a]" />
      <div className="absolute top-[1px] left-[6px] h-6 w-[2872px] rounded-t-[20px] border-t-2 border-[#6c6c6c] bg-[#282828]" />
      <div className="absolute top-[1400px] left-[2272px] h-[297px] w-[605px] border-b-2 border-[#666] bg-gradient-to-r from-[#8a8a8a] to-[#bdbdbd]" />
      <div className="absolute top-[1484px] left-[2848px] h-[120px] w-[29px] bg-gradient-to-b from-[#333]/80 to-transparent" />
      <div className="absolute top-[1697px] left-0 h-[50px] w-[2878px] rounded-b-[20px] border-t border-[#555] bg-[#232323]" />
      <div className="absolute top-[1632px] left-[97px] flex gap-[18px] text-[24px] leading-[28px] tracking-[0.500px] text-[#b0b0b0]">
        <i className="h-7 w-[22px] bg-[#aaa]" />
        performance.xls
      </div>
      <i className="absolute top-[1640px] left-[1734px] h-5 w-8 bg-[#4a4a4a]" />
      <div className="absolute top-[1636px] left-[1796px] text-[25px] leading-[28px] tracking-[0.400px] text-[#999]">no matches</div>
      <i className="absolute top-[1640px] left-[1960px] h-5 w-6 rounded-full bg-[#777]" />
      <i className="absolute top-[1640px] left-[2013px] h-5 w-6 rounded-full bg-[#777]" />
      <span className="absolute top-[1654px] left-[2824px] font-['DejaVu_Sans_Mono',monospace] text-[31px] leading-[40px] text-[#555]">ot</span>
      <span className="absolute top-[1697px] left-[2814px] text-[26px] leading-[36px] text-[#ddd]">%</span>
    </div>
  );
}

export default function App() {
  return (
    <div className="relative h-[1800px] w-[2880px] overflow-hidden bg-[#161616]">
      <MenuBar />
      <Backdrop />
      <Mail />
      <Browser />
      <Dock />
    </div>
  );
}
